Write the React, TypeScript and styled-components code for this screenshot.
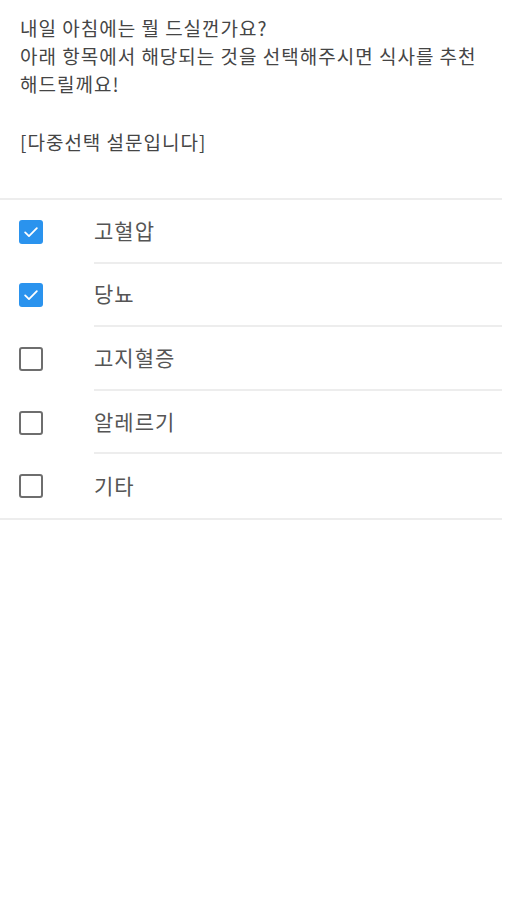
import React from "react";
import styled, { createGlobalStyle } from "styled-components";

const GlobalStyle = createGlobalStyle`
  html, body {
    margin: 0;
    padding: 0;
    background: #ffffff;
  }
  body {
    font-family: "Noto Sans CJK KR", "Noto Sans", sans-serif;
  }
`;

const Page = styled.div`
  width: 502px;
  background: #ffffff;
`;

const Intro = styled.div`
  padding: 14px 20px 0 20px;
  font-size: 19px;
  letter-spacing: 1px;
  line-height: 28px;
  color: #454545;
`;

const Line = styled.p<{ $gap?: boolean }>`
  margin: 0;
  margin-top: ${(p) => (p.$gap ? "30px" : "0")};
  white-space: nowrap;
`;

const List = styled.ul`
  list-style: none;
  margin: 42px 0 0 0;
  padding: 0;
  border-top: 2px solid #ededed;
  border-bottom: 2px solid #ededed;
`;

const Row = styled.li`
  display: flex;
  align-items: center;
  height: 63.6px;
  &:not(:last-child) > span {
    border-bottom: 2px solid #ededed;
  }
`;

const BoxCell = styled.div`
  width: 94px;
  flex-shrink: 0;
  display: flex;
  align-items: center;
  padding-left: 19px;
  box-sizing: border-box;
`;

const Box = styled.div<{ $checked: boolean }>`
  width: 24px;
  height: 24px;
  box-sizing: border-box;
  border-radius: 3px;
  display: flex;
  align-items: center;
  justify-content: center;
  background: ${(p) => (p.$checked ? "#2a93ee" : "#ffffff")};
  border: ${(p) => (p.$checked ? "none" : "2.5px solid #6e6e6e")};
`;

const Label = styled.span`
  flex: 1;
  height: 100%;
  display: flex;
  align-items: center;
  box-sizing: border-box;
  padding-bottom: 2px;
  font-size: 21px;
  letter-spacing: 1px;
  color: #555555;
`;

const options = [
  { label: "고혈압", checked: true },
  { label: "당뇨", checked: true },
  { label: "고지혈증", checked: false },
  { label: "알레르기", checked: false },
  { label: "기타", checked: false },
];

const Check = () => (
  <svg width="18" height="18" viewBox="0 0 16 16">
    <path
      d="M2.8 8.4 L6.2 11.6 L13.2 4.6"
      fill="none"
      stroke="#ffffff"
      strokeWidth="1.6"
      strokeLinecap="round"
      strokeLinejoin="round"
    />
  </svg>
);

export default function App() {
  return (
    <Page>
      <GlobalStyle />
      <Intro>
        <Line>내일 아침에는 뭘 드실껀가요?</Line>
        <Line>아래 항목에서 해당되는 것을 선택해주시면 식사를 추천</Line>
        <Line>해드릴께요!</Line>
        <Line $gap>[다중선택 설문입니다]</Line>
      </Intro>
      <List>
        {options.map((o) => (
          <Row key={o.label}>
            <BoxCell>
              <Box $checked={o.checked}>{o.checked && <Check />}</Box>
            </BoxCell>
            <Label>{o.label}</Label>
          </Row>
        ))}
      </List>
    </Page>
  );
}
